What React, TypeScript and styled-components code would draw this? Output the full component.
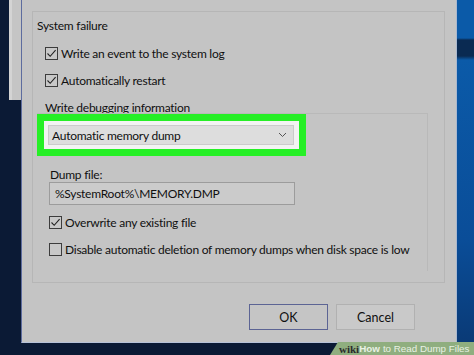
import React from 'react'
import styled, { createGlobalStyle } from 'styled-components'

const GlobalStyle = createGlobalStyle`
  html, body {
    margin: 0;
    padding: 0;
    overflow: hidden;
    background: #0b1a35;
  }
  * {
    box-sizing: border-box;
  }
`

const Desktop = styled.div`
  display: grid;
  grid-template-columns: 21px 436px 1fr;
  grid-template-rows: 343px 12px;
  width: 474px;
  height: 355px;
  font-family: Lato, 'Noto Sans', sans-serif;
  font-size: 12px;
  letter-spacing: -0.25px;
  color: #101010;
`

const LeftEdge = styled.div`
  background: #0b1a35;
  padding-left: 9px;
`

const BehindWindow = styled.div`
  width: 12px;
  height: 100px;
  background: linear-gradient(to right, #d4d4d4 0 3px, #c5c5c5 3px);
`

const RightEdge = styled.div`
  background: linear-gradient(
    to bottom,
    #0b5aa8 0,
    #0b5aa8 38px,
    #0a2a52 40px,
    #0a2a52 56px,
    #0b5aa8 60px,
    #0a4d98 240px,
    #0a3a76 100%
  );
`

const Dialog = styled.div`
  display: flex;
  flex-direction: column;
  background: #c4c4c4;
  border-left: 1px solid #5d6c9e;
  border-right: 1px solid #a9b8cf;
  border-bottom: 1px solid #b7c2d8;
  padding: 11px 11px 0 10px;
`

const GroupBox = styled.div`
  height: 272px;
  border: 1px solid #b6b6b6;
  padding: 6px 0 0 4px;
  display: flex;
  flex-direction: column;
`

const GroupLabel = styled.div<{ $indent?: number; $top?: number }>`
  line-height: 16px;
  margin-left: ${(p) => p.$indent || 0}px;
  margin-top: ${(p) => p.$top || 0}px;
  white-space: nowrap;
`

const CheckRow = styled.label<{ $indent: number; $top: number }>`
  display: flex;
  align-items: center;
  gap: 3px;
  height: 16px;
  margin-top: ${(p) => p.$top}px;
  margin-left: ${(p) => p.$indent}px;
  white-space: nowrap;
`

const CheckBox = styled.span`
  display: flex;
  align-items: center;
  justify-content: center;
  width: 13px;
  height: 13px;
  border: 1px solid #3c3c3c;
  background: #c8c8c8;
  flex-shrink: 0;
`

const DebugBox = styled.div`
  width: 391px;
  height: 158px;
  border-top: 1px solid #b9b9b9;
  border-right: 1px solid #b9b9b9;
  margin-top: -3px;
  display: flex;
  flex-direction: column;
`

const Highlight = styled.div`
  width: 269px;
  height: 42px;
  border: 7px solid #26ef26;
  background: #f3f3f3;
  padding: 4px 5px 4px 4px;
`

const Combo = styled.div`
  height: 100%;
  display: flex;
  align-items: center;
  justify-content: space-between;
  background: #dddddd;
  border: 1px solid #cbcbcb;
  padding: 0 6px 0 3px;
`

const DumpLabel = styled.div`
  line-height: 15px;
  margin: 11px 0 0 13px;
`

const Field = styled.div`
  width: 246px;
  height: 23px;
  margin-left: 12px;
  border: 1px solid #9c9c9c;
  background: #cbcbcb;
  padding-left: 5px;
  display: flex;
  align-items: center;
`

const ButtonRow = styled.div`
  display: flex;
  justify-content: flex-end;
  gap: 8px;
  margin-top: 21px;
  padding-right: 30px;
`

const Button = styled.button<{ $focus?: boolean }>`
  width: 79px;
  height: 26px;
  font-family: inherit;
  font-size: 12.5px;
  color: #101010;
  background: ${(p) => (p.$focus ? '#c5c5c5' : '#c9c9c9')};
  border: 1px solid ${(p) => (p.$focus ? '#5c6494' : '#b1b1b1')};
  padding: 0;
`

const BottomStrip = styled.div`
  grid-column: 1 / 4;
  display: flex;
  justify-content: flex-end;
  background: #0b1a35;
`

const Banner = styled.div`
  width: 144px;
  height: 13px;
  margin-top: -1px;
  background: #8fae7f;
  clip-path: polygon(8px 0, 100% 0, 100% 100%, 0 100%);
  display: flex;
  align-items: center;
  padding-left: 9px;
  font-size: 9.8px;
  letter-spacing: 0;
  font-family: 'Liberation Sans', Arial, sans-serif;
  color: #e9f1e4;
  white-space: nowrap;
`

const Wiki = styled.span`
  font-family: 'Liberation Serif', 'Times New Roman', serif;
  font-weight: 700;
  font-size: 11px;
  color: #2b2b2b;
`

const How = styled.span`
  font-weight: 700;
  margin-right: 3px;
`

const tick = (
  <svg width="11" height="11" viewBox="0 0 11 11">
    <polyline points="1.5,5.5 4.2,8.3 9.6,2.2" fill="none" stroke="#222" strokeWidth="1.1" />
  </svg>
)

const chevron = (
  <svg width="9" height="6" viewBox="0 0 9 6">
    <polyline points="1,1 4.5,4.5 8,1" fill="none" stroke="#555" strokeWidth="1" />
  </svg>
)

function Check({ checked }: { checked: boolean }) {
  return <CheckBox>{checked && tick}</CheckBox>
}

export default function App() {
  return (
    <>
      <GlobalStyle />
      <Desktop>
        <LeftEdge>
          <BehindWindow />
        </LeftEdge>
        <Dialog>
          <GroupBox>
            <GroupLabel>System failure</GroupLabel>
            <CheckRow $indent={8} $top={11}>
              <Check checked />
              Write an event to the system log
            </CheckRow>
            <CheckRow $indent={8} $top={11}>
              <Check checked />
              Automatically restart
            </CheckRow>
            <GroupLabel $indent={8} $top={12}>
              Write debugging information
            </GroupLabel>
            <DebugBox>
              <Highlight>
                <Combo>
                  <span>Automatic memory dump</span>
                  {chevron}
                </Combo>
              </Highlight>
              <DumpLabel>Dump file:</DumpLabel>
              <Field>%SystemRoot%\MEMORY.DMP</Field>
              <CheckRow $indent={12} $top={9}>
                <Check checked />
                Overwrite any existing file
              </CheckRow>
              <CheckRow $indent={12} $top={11}>
                <Check checked={false} />
                Disable automatic deletion of memory dumps when disk space is low
              </CheckRow>
            </DebugBox>
          </GroupBox>
          <ButtonRow>
            <Button $focus>OK</Button>
            <Button>Cancel</Button>
          </ButtonRow>
        </Dialog>
        <RightEdge />
        <BottomStrip>
          <Banner>
            <Wiki>wiki</Wiki>
            <How>How</How>
            to Read Dump Files
          </Banner>
        </BottomStrip>
      </Desktop>
    </>
  )
}
